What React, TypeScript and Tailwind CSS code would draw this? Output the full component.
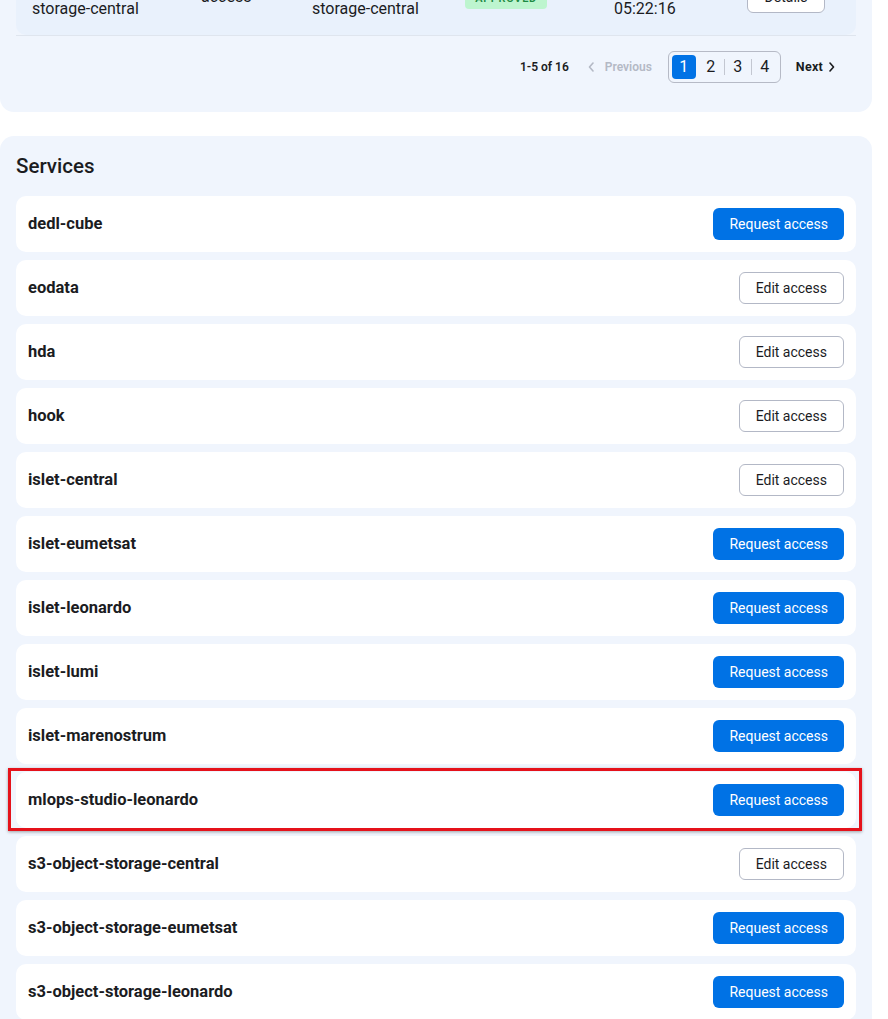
import React from "react";

type Svc = { name: string; edit: boolean; highlight?: boolean };

const services: Svc[] = [
  { name: "dedl-cube", edit: false },
  { name: "eodata", edit: true },
  { name: "hda", edit: true },
  { name: "hook", edit: true },
  { name: "islet-central", edit: true },
  { name: "islet-eumetsat", edit: false },
  { name: "islet-leonardo", edit: false },
  { name: "islet-lumi", edit: false },
  { name: "islet-marenostrum", edit: false },
  { name: "mlops-studio-leonardo", edit: false, highlight: true },
  { name: "s3-object-storage-central", edit: true },
  { name: "s3-object-storage-eumetsat", edit: false },
  { name: "s3-object-storage-leonardo", edit: false },
  { name: "s3-object-storage-lumi", edit: false },
];

function ChevronLeft({ className }: { className?: string }) {
  return (
    <svg className={className} width="6" height="10" viewBox="0 0 6 10" fill="none">
      <path d="M5 1L1.5 5L5 9" stroke="currentColor" strokeWidth="1.6" strokeLinecap="round" strokeLinejoin="round" />
    </svg>
  );
}

function ChevronRight({ className }: { className?: string }) {
  return (
    <svg className={className} width="6" height="10" viewBox="0 0 6 10" fill="none">
      <path d="M1 1L4.5 5L1 9" stroke="currentColor" strokeWidth="1.6" strokeLinecap="round" strokeLinejoin="round" />
    </svg>
  );
}

export default function App() {
  return (
    <div
      className="min-h-screen bg-white text-[#1b1c1f] overflow-hidden"
      style={{ fontFamily: "Roboto, 'Liberation Sans', sans-serif" }}
    >
      <div className="w-[872px] -mt-[41px]">
        {/* Requests panel (scrolled) */}
        <div className="bg-[#f0f5fd] rounded-b-[14px] px-4">
          <div className="bg-[#e9f1fc] rounded-b-[10px] h-[76px] pl-4 grid grid-cols-[169px_111px_153px_149px_133px_auto] items-center text-[16px] leading-6">
            <div>
              <div>s3-object-</div>
              <div>storage-central</div>
            </div>
            <div>access</div>
            <div>
              <div>s3-object-</div>
              <div>storage-central</div>
            </div>
            <div>
              <span className="inline-flex items-center justify-center w-[82px] h-[20px] rounded-[4px] bg-[#bdf5cf] text-[#1c8a43] text-[11px] font-semibold tracking-[0.06em]">
                APPROVED
              </span>
            </div>
            <div>
              <div>2025-01-14</div>
              <div>05:22:16</div>
            </div>
            <div>
              <button className="w-[78px] h-8 rounded-md border border-[#b3b8c6] bg-white text-[14px] text-[#1b1c1f]">
                Details
              </button>
            </div>
          </div>
          <div className="h-px bg-[#dfe5ee]" />
          <div className="flex items-center justify-end pt-[15px] pb-[29px] pr-5">
            <span className="text-[12px] font-semibold text-[#1b1c1f]">1-5 of 16</span>
            <button className="ml-[19px] flex items-center gap-[11px] text-[12px] font-semibold text-[#b4b9c5]">
              <ChevronLeft />
              <span>Previous</span>
            </button>
            <div className="ml-4 flex items-center rounded-md border border-[#b6bac6] p-[3px]">
              <button className="w-6 h-6 rounded-[4px] bg-[#0072e5] text-white text-[16px] flex items-center justify-center">
                1
              </button>
              <span className="w-[3px]" />
              <button className="w-6 h-6 text-[16px] flex items-center justify-center text-[#1b1c1f]">2</button>
              <span className="w-[3px] flex justify-center">
                <span className="w-px h-4 bg-[#c3c7d1]" />
              </span>
              <button className="w-6 h-6 text-[16px] flex items-center justify-center text-[#1b1c1f]">3</button>
              <span className="w-[3px] flex justify-center">
                <span className="w-px h-4 bg-[#c3c7d1]" />
              </span>
              <button className="w-6 h-6 text-[16px] flex items-center justify-center text-[#1b1c1f]">4</button>
            </div>
            <button className="ml-[15px] flex items-center gap-[6px] text-[12.5px] font-bold text-[#1b1c1f] pr-[1px]">
              <span className="tracking-[0.02em]">Next</span>
              <ChevronRight />
            </button>
          </div>
        </div>

        {/* Services panel */}
        <div className="mt-[24px] bg-[#f0f5fd] rounded-[14px] px-4 pt-4 pb-4">
          <h2 className="text-[20.5px] leading-7 font-medium text-[#1b1c1f]">Services</h2>
          <div className="mt-4 flex flex-col gap-2">
            {services.map((s) => (
              <div key={s.name} className="relative">
                <div className="h-14 bg-white rounded-[10px] pl-3 pr-3 flex items-center justify-between">
                  <span className="text-[16.5px] font-bold text-[#1b1c1f]">{s.name}</span>
                  {s.edit ? (
                    <button className="h-8 px-4 rounded-md border border-[#b3b8c6] bg-white text-[14px] text-[#1b1c1f]">
                      Edit access
                    </button>
                  ) : (
                    <button className="h-8 px-4 rounded-md bg-[#0072e5] text-[14px] text-white">
                      Request access
                    </button>
                  )}
                </div>
                {s.highlight && (
                  <div className="pointer-events-none absolute -left-2 -right-[6px] -top-1 -bottom-[3px] border-[3px] border-[#e5121b] shadow-[0_1px_3px_rgba(0,0,0,0.35)]" />
                )}
              </div>
            ))}
          </div>
        </div>
      </div>
    </div>
  );
}
